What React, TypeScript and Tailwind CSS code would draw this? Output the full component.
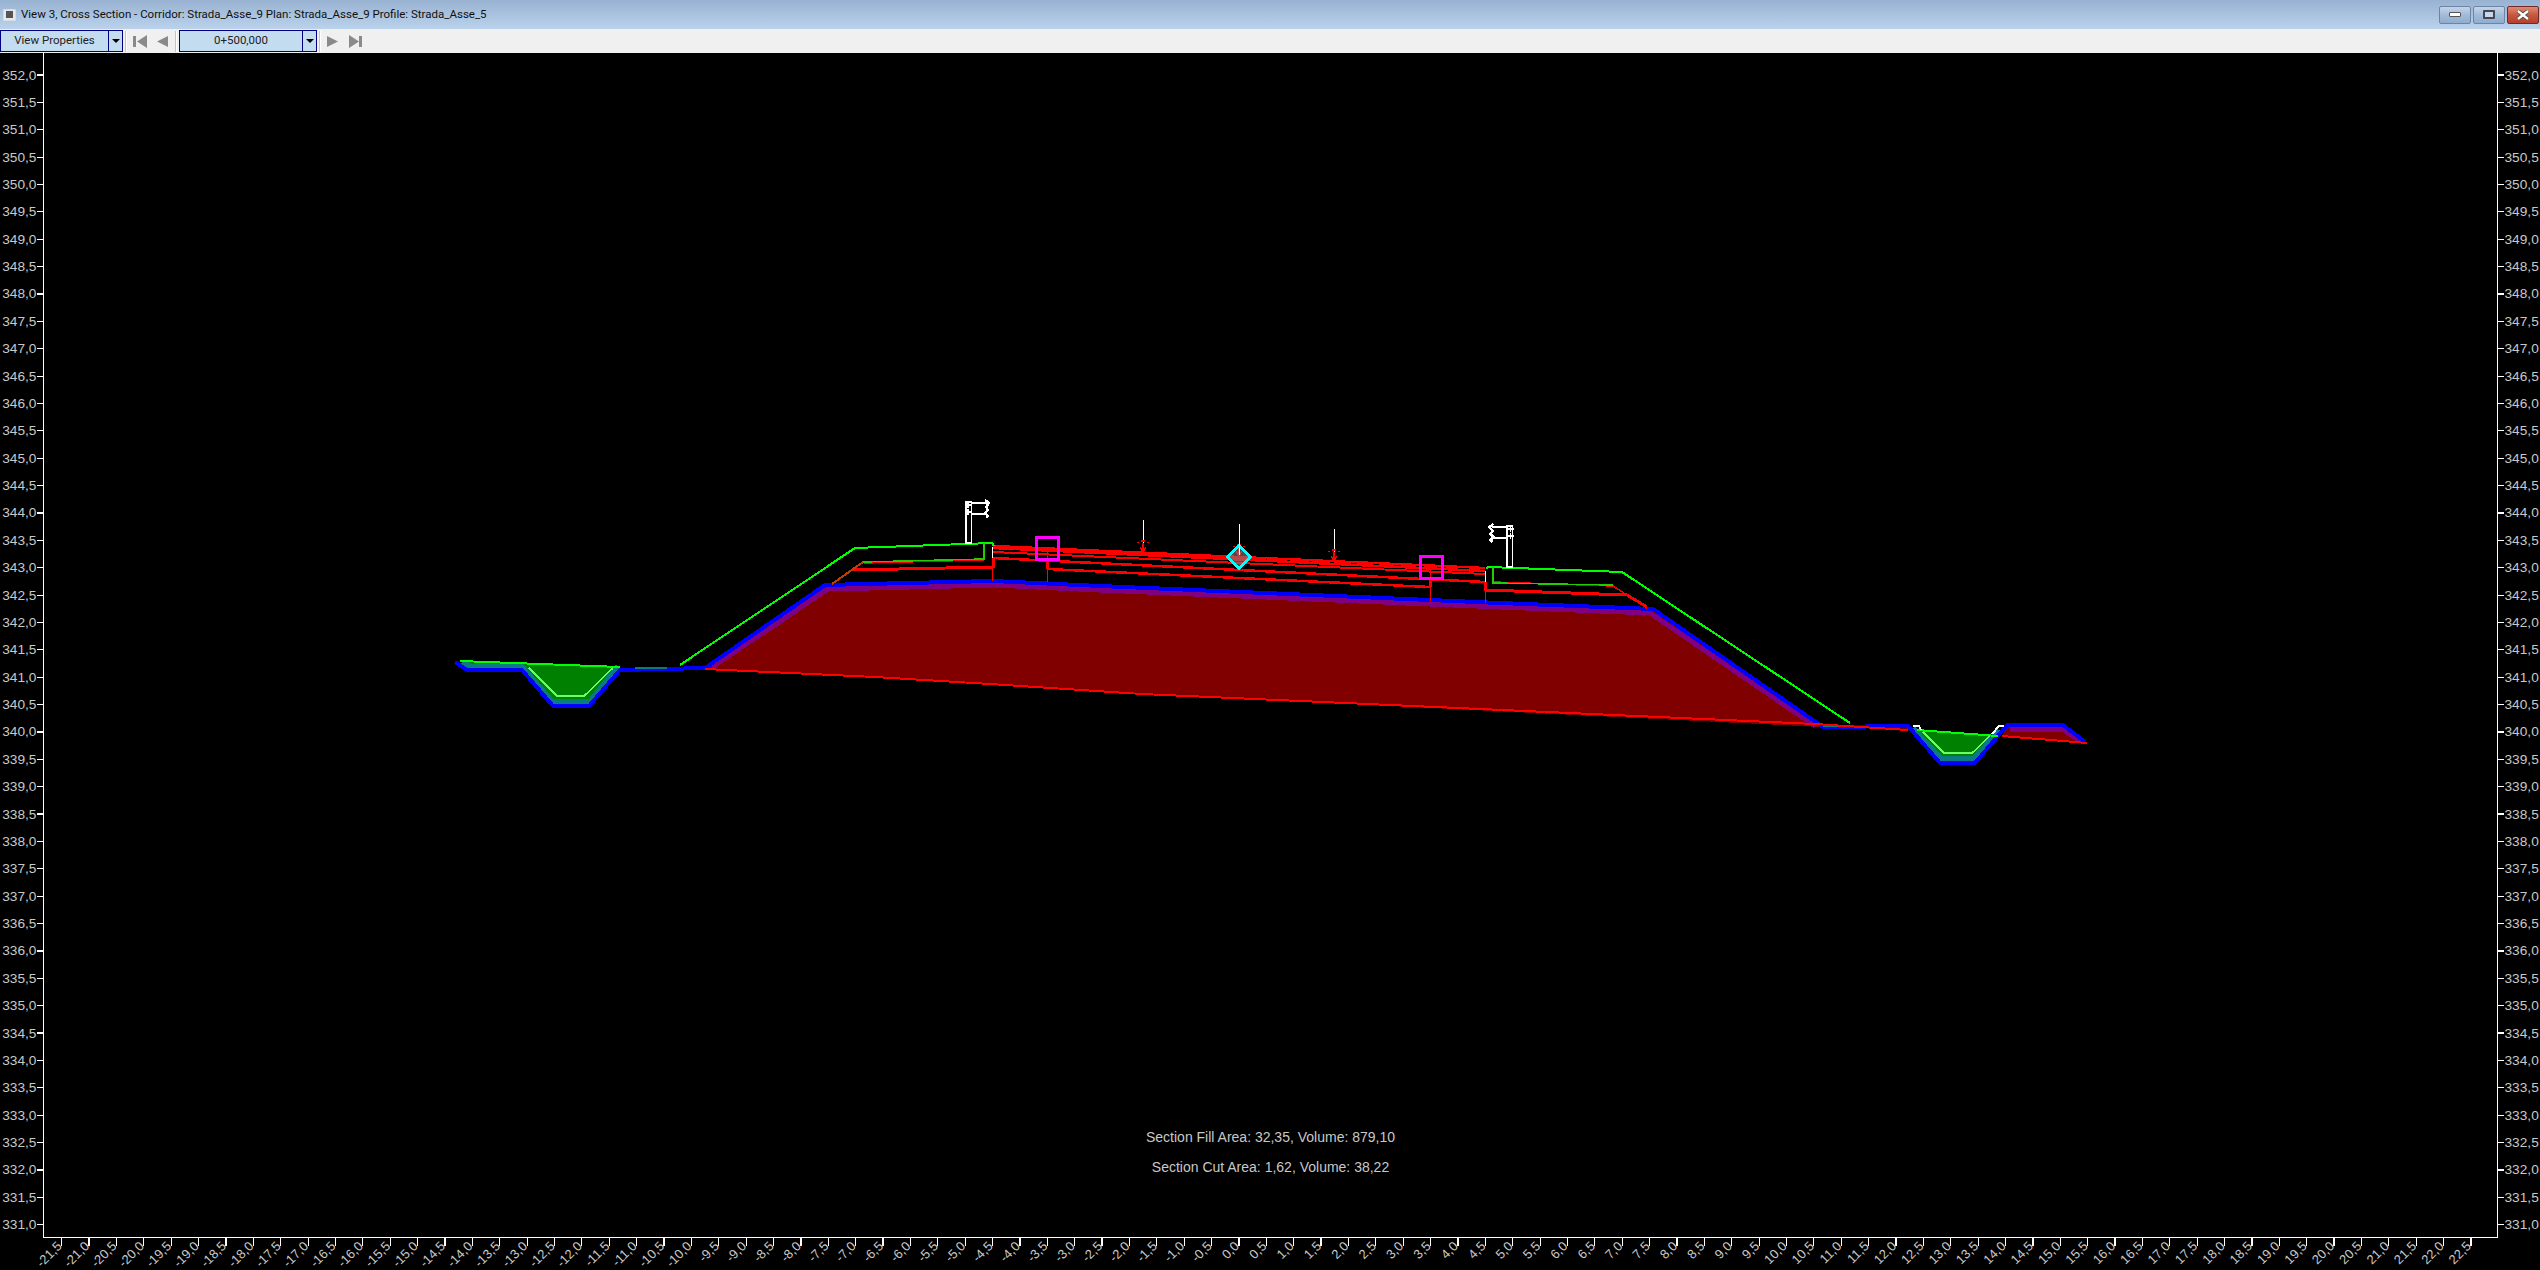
import React from "react";

const yLabels = Array.from({ length: 43 }, (_, i) => 352 - i * 0.5);
const xLabels = Array.from({ length: 89 }, (_, i) => -21.5 + i * 0.5);
const yPos = (i: number) => 75 + i * 27.374;
const xPos = (i: number) => 61.7 + i * 27.378;
const fmt = (v: number) => v.toFixed(1).replace(".", ",");

const BLUE = "455,662 467,670 522,670 553,706 589,706 620,670 705,668 825,585 993,581 1100,586 1500,603 1653,609 1823,727 1908,726 1940,763 1975,763 2007,725 2063,725 2085,742";

function Sign({ flip }: { flip?: boolean }) {
  return (
    <g transform={flip ? "translate(2478.5 24) scale(-1 1)" : undefined} stroke="#fff" fill="none" shapeRendering="crispEdges">
      <rect x="966" y="502" width="5.5" height="41" strokeWidth="1.2" />
      <path d="M965 505 L971 505 M968 502 L968 508 M965 512 L971 512 M968 509 L968 515" strokeWidth="1.5" />
      <path d="M971 503 L987 503 M971 514 L985 514" strokeWidth="1.5" />
      <path d="M985 500 L989 503 L986 507 L988 510 L985 513 L988 516 L986 518" strokeWidth="2.4" />
    </g>
  );
}

function RedArrow({ x, y }: { x: number; y: number }) {
  return (
    <g>
      <line x1={x} y1={y - 32} x2={x} y2={y} stroke="#fff" strokeWidth="1" />
      <path d={`M${x - 6} ${y - 9} L${x - 4} ${y - 10} M${x - 2} ${y - 11} L${x + 2} ${y - 11} M${x + 4} ${y - 10} L${x + 6} ${y - 9} M${x - 3} ${y - 5} L${x} ${y} L${x + 3} ${y - 5} M${x} ${y - 9} L${x} ${y}`} stroke="#ff0000" strokeWidth="1.2" fill="none" />
    </g>
  );
}

function Section() {
  return (
    <g fill="none" shapeRendering="crispEdges">
      <polygon points="705,669 825,585 993,581 1100,586 1500,603 1653,609 1823,727 1142,694 990,684" fill="#800000" />
      <polygon points="2007,725 2063,725 2085,742 2087,743 2002,736" fill="#800000" />
      <polygon points="1860,726 1908,726 1908,730" fill="#800000" />
      <polygon points="460,661 620,667 589,704 553,704 522,668 467,668" fill="#008000" />
      <polygon points="1915,730 1998,736 1975,760 1940,760" fill="#008000" />

      <polyline points="712,667 828,589 993,585 1100,590 1500,607 1650,613 1815,726" stroke="#800080" strokeWidth="5" />
      <polyline points="2010,729 2063,729 2080,741" stroke="#800080" strokeWidth="5" />
      <polyline points="462,662 470,666 522,666 552,701 590,701 618,666" stroke="#087c80" strokeWidth="5" />
      <polyline points="1913,728 1941,758 1974,758 1999,730" stroke="#087c80" strokeWidth="5" />
      <polyline points={BLUE} stroke="#0000ff" strokeWidth="4" />
      <polyline points="635,668 667,668" stroke="#087c80" strokeWidth="1.5" />
      <polyline points="1823,726 1853,726" stroke="#087c80" strokeWidth="2" />

      <polyline points="705,669 875,677 990,684 1142,694 1458,708 1815,724 1908,730" stroke="#ff0000" strokeWidth="2" />
      <polyline points="2002,736 2087,743" stroke="#ff0000" strokeWidth="2" />

      <polyline points="460,661 620,667" stroke="#00ff00" strokeWidth="2" />
      <polyline points="1917,730 1998,736" stroke="#00ff00" strokeWidth="2" />
      <polyline points="529,668 557,696 584,696 613,668" stroke="#66ff66" strokeWidth="1.5" />
      <polyline points="1923,732 1944,753 1972,753 1990,736" stroke="#66ff66" strokeWidth="1.5" />
      <polyline points="1913,726 1919,726 1921,730" stroke="#ffffff" strokeWidth="2" />
      <polyline points="1992,734 1999,726 2004,726" stroke="#ffffff" strokeWidth="2" />

      <g stroke="#ff0000">
        <line x1="993" y1="546" x2="1485" y2="568" strokeWidth="2.5" />
        <line x1="993" y1="548" x2="1485" y2="571" strokeWidth="2.5" />
        <line x1="993" y1="552" x2="1485" y2="574" strokeWidth="2" />
        <line x1="993" y1="558" x2="1485" y2="582" strokeWidth="2.5" />
        <line x1="1047" y1="569" x2="1430" y2="587" strokeWidth="2.5" />
        <polyline points="852,570 993,567 993,558" strokeWidth="3" />
        <line x1="992.5" y1="567" x2="992.5" y2="581" strokeWidth="1" />
        <line x1="864" y1="563" x2="984" y2="560" strokeWidth="1.5" />
        <line x1="1047" y1="560" x2="1047" y2="569" strokeWidth="3" />
        <line x1="1047.5" y1="550" x2="1047.5" y2="582" strokeWidth="1" />
        <line x1="1430" y1="580" x2="1430" y2="587" strokeWidth="3" />
        <line x1="1430.5" y1="567" x2="1430.5" y2="601" strokeWidth="1" />
        <polyline points="1485,582 1485,590 1627,595 1647,607" strokeWidth="3" />
        <line x1="1485.5" y1="590" x2="1485.5" y2="603" strokeWidth="1" />
        <polyline points="1493,582 1613,586 1647,608" strokeWidth="1.5" />
      </g>
      <line x1="992.5" y1="547" x2="992.5" y2="558" stroke="#fff" strokeWidth="1" />
      <line x1="1485.5" y1="571" x2="1485.5" y2="582" stroke="#fff" strokeWidth="1" />

      <polyline points="680,665 855,548 992,543 994,546" stroke="#00ff00" strokeWidth="2" />
      <polyline points="1486,569 1488,567 1622,572 1850,723" stroke="#00ff00" strokeWidth="2" />
      <polyline points="984,543 984,559 863,562" stroke="#22cc00" strokeWidth="1.5" />
      <polyline points="1493,567 1493,583 1613,585" stroke="#22cc00" strokeWidth="1.5" />
      <line x1="863" y1="562" x2="832" y2="584" stroke="#c04000" strokeWidth="2" />

      <RedArrow x={1143} y={552} />
      <RedArrow x={1239} y={556} />
      <RedArrow x={1334} y={561} />

      <polygon points="1239,545.5 1250.5,557 1239,568.5 1227.5,557" fill="#808080" fillOpacity="0.6" stroke="#00ffff" strokeWidth="3" />
      <line x1="1239.5" y1="524" x2="1239.5" y2="555" stroke="#fff" strokeWidth="1" />
      <rect x="1036.5" y="537.5" width="22" height="22" stroke="#ff00ff" strokeWidth="3" />
      <rect x="1420" y="556" width="22" height="22" stroke="#ff00ff" strokeWidth="3" />

      <Sign />
      <Sign flip />
    </g>
  );
}

function Axes() {
  return (
    <g>
      <path d="M43.5 53 V1237.5 H2497.5 V53" stroke="#fff" strokeWidth="1.5" fill="none" shapeRendering="crispEdges" />
      {yLabels.map((v, i) => (
        <g key={v}>
          <line x1="37" x2="43" y1={yPos(i)} y2={yPos(i)} stroke="#fff" strokeWidth="1.2" shapeRendering="crispEdges" />
          <line x1="2497" x2="2504" y1={yPos(i)} y2={yPos(i)} stroke="#fff" strokeWidth="1.2" shapeRendering="crispEdges" />
          <text x="36.5" y={yPos(i) + 4.5} textAnchor="end" fontSize="13.7" fill="#c8c8c8">{fmt(v)}</text>
          <text x="2504.5" y={yPos(i) + 4.5} fontSize="13.7" fill="#c8c8c8">{fmt(v)}</text>
        </g>
      ))}
      {xLabels.map((v, i) => (
        <g key={v}>
          <line x1={xPos(i)} x2={xPos(i)} y1="1237" y2="1246" stroke="#fff" strokeWidth="1.2" shapeRendering="crispEdges" />
          <text transform={`translate(${xPos(i) + 1} 1247) rotate(-45)`} textAnchor="end" fontSize="13" fill="#c8c8c8">{fmt(v)}</text>
        </g>
      ))}
      <text x="1270.5" y="1142" textAnchor="middle" fontSize="14" fill="#c8c8c8">Section Fill Area: 32,35, Volume: 879,10</text>
      <text x="1270.5" y="1172" textAnchor="middle" fontSize="14" fill="#c8c8c8">Section Cut Area: 1,62, Volume: 38,22</text>
    </g>
  );
}

function Caret() {
  return <span className="h-0 w-0 border-x-[4px] border-t-[4px] border-x-transparent border-t-black" />;
}

function Sep() {
  return <span className="mx-[2px] block h-[21px] w-[2px] shrink-0 border-r border-white bg-[#c4c4c4]" />;
}

function Nav({ d, w }: { d: string; w: number }) {
  return (
    <svg width={w} height="13" viewBox={`0 0 ${w} 13`} className="shrink-0">
      <path d={d} fill="#8a8a8a" />
    </svg>
  );
}

function WinBtn({ children, red }: { children: React.ReactNode; red?: boolean }) {
  return (
    <div
      className={`flex h-[18px] w-[32px] items-center justify-center rounded-[2px] border ${
        red
          ? "border-[#6e2a2a] bg-gradient-to-b from-[#e08a72] via-[#c8573f] to-[#b2402f]"
          : "border-[#6d85a5] bg-gradient-to-b from-[#c3d5ea] via-[#a3bbd8] to-[#8facd0]"
      }`}
    >
      {children}
    </div>
  );
}

export default function App() {
  return (
    <div className="flex h-[1270px] w-[2540px] flex-col overflow-hidden bg-black font-['Liberation_Sans',sans-serif]">
      <div className="flex h-[29px] shrink-0 items-center bg-gradient-to-b from-[#98b2d1] to-[#bad2ec] pl-[3px] pr-[1px]">
        <div className="flex h-[12px] w-[13px] items-center justify-center rounded-[1px] border border-[#d5dde8] bg-[#e8e8e8]">
          <span className="h-[7px] w-[7px] bg-[#555]" />
        </div>
        <span className="ml-[5px] font-['Roboto',sans-serif] text-[11.5px] whitespace-nowrap text-[#101010]">
          View 3, Cross Section - Corridor: Strada_Asse_9 Plan: Strada_Asse_9 Profile: Strada_Asse_5
        </span>
        <div className="ml-auto flex gap-[2px]">
          <WinBtn>
            <span className="h-[5px] w-[12px] rounded-[1px] border border-[#555] bg-white" />
          </WinBtn>
          <WinBtn>
            <span className="h-[9px] w-[12px] rounded-[1px] border-[2px] border-[#445] bg-[#c8d8ea]" />
          </WinBtn>
          <WinBtn red>
            <svg width="14" height="10" viewBox="0 0 14 10">
              <path d="M2 1 L12 9 M12 1 L2 9" stroke="#444" strokeWidth="4" />
              <path d="M2 1 L12 9 M12 1 L2 9" stroke="#fff" strokeWidth="2.4" />
            </svg>
          </WinBtn>
        </div>
      </div>

      <div className="flex h-[24px] shrink-0 items-center bg-[#f0f0f0] font-['Roboto',sans-serif] text-[11.5px] text-[#222]">
        <div className="flex h-[22px] w-[123px] shrink-0 border border-[#000080] bg-[#c4dcf0]">
          <span className="flex w-[108px] items-center justify-center border-r border-[#000080]">View Properties</span>
          <span className="flex flex-1 items-center justify-center"><Caret /></span>
        </div>
        <Sep />
        <div className="ml-[4px] flex items-center gap-[10px]">
          <Nav w={14} d="M0 1 H3 V12 H0 Z M14 0 V13 L4 6.5 Z" />
          <Nav w={11} d="M11 1 V12 L0 6.5 Z" />
        </div>
        <div className="ml-[5px]"><Sep /></div>
        <div className="flex h-[22px] w-[138px] shrink-0 border border-[#000080] bg-[#c4dcf0]">
          <span className="flex w-[123px] items-center justify-center border-r border-[#000080]">0+500,000</span>
          <span className="flex flex-1 items-center justify-center"><Caret /></span>
        </div>
        <Sep />
        <div className="ml-[4px] flex items-center gap-[11px]">
          <Nav w={11} d="M0 1 V12 L11 6.5 Z" />
          <Nav w={13} d="M0 0 V13 L10 6.5 Z M10 1 H13 V12 H10 Z" />
        </div>
      </div>

      <div className="min-h-0 flex-1">
        <svg viewBox="0 53 2540 1217" className="block h-[1217px] w-[2540px]" fontFamily="Liberation Sans, sans-serif">
          <Section />
          <Axes />
        </svg>
      </div>
    </div>
  );
}
